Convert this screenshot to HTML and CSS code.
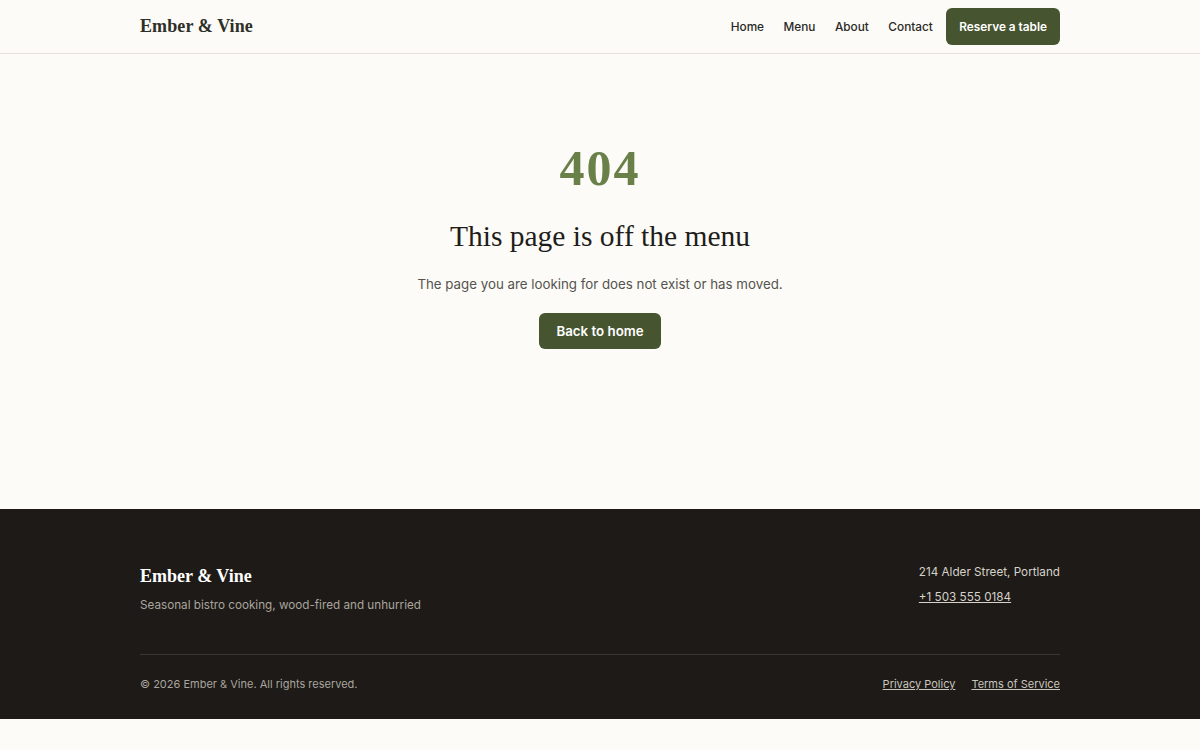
FILE: index.html
```html
<!DOCTYPE html>
<html lang="en">
<head>
    <meta charset="UTF-8">
    <meta name="viewport" content="width=device-width, initial-scale=1.0">
    <title>Page not found | Ember &amp; Vine</title>
    <link rel="stylesheet" href="styles.css">
</head>
<body>
    <header class="site-header">
        <div class="wrap header-row">
            <a class="logo" href="#">Ember &amp; Vine</a>
            <nav class="nav">
                <a href="#">Home</a>
                <a href="#">Menu</a>
                <a href="#">About</a>
                <a href="#">Contact</a>
                <a class="btn btn-nav" href="#">Reserve a table</a>
            </nav>
        </div>
    </header>

    <main class="not-found">
        <div class="code">404</div>
        <h1 class="title">This page is off the menu</h1>
        <p class="lead">The page you are looking for does not exist or has moved.</p>
        <a class="btn btn-home" href="#">Back to home</a>
    </main>

    <footer class="site-footer">
        <div class="wrap">
            <div class="footer-top">
                <div>
                    <div class="footer-logo">Ember &amp; Vine</div>
                    <p class="tagline">Seasonal bistro cooking, wood-fired and unhurried</p>
                </div>
                <div class="contact">
                    <p>214 Alder Street, Portland</p>
                    <a href="#">+1 503 555 0184</a>
                </div>
            </div>
            <div class="footer-bottom">
                <span>&copy; 2026 Ember &amp; Vine. All rights reserved.</span>
                <div class="legal">
                    <a href="#">Privacy Policy</a>
                    <a href="#">Terms of Service</a>
                </div>
            </div>
        </div>
    </footer>
</body>
</html>
```

FILE: styles.css
```css
*{
    padding:0;
    margin:0;
    box-sizing:border-box;
}
body{
    background:#fcfbf7;
    color:#1f1d1a;
    font-family:Inter, "Noto Sans", sans-serif;
}
a{
    color:inherit;
    text-decoration:none;
}
.wrap{
    width:920px;
    margin:0 auto;
}

/* header */
.site-header{
    border-bottom:1px solid #e6e3dc;
}
.header-row{
    height:53px;
    display:flex;
    align-items:center;
    justify-content:space-between;
}
.logo{
    font-family:"Liberation Serif", "DejaVu Serif", serif;
    font-weight:bold;
    font-size:18px;
    letter-spacing:0.1px;
    color:#2e2f27;
}
.nav{
    display:flex;
    align-items:center;
    gap:19.5px;
    font-size:11.8px;
    font-weight:500;
    color:#2a2926;
}
.btn{
    display:inline-flex;
    align-items:center;
    justify-content:center;
    background:#46552f;
    color:#fff;
    font-weight:600;
    border-radius:6px;
}
.btn-nav{
    height:37px;
    padding:0 13px;
    margin-left:-6px;
}

/* 404 block */
.not-found{
    height:455px;
    display:flex;
    flex-direction:column;
    align-items:center;
    padding-top:86px;
    text-align:center;
}
.code{
    font-family:"Liberation Serif", "DejaVu Serif", serif;
    font-weight:bold;
    font-size:50px;
    line-height:56px;
    letter-spacing:2px;
    color:#6a8049;
}
.title{
    font-family:"Liberation Serif", "DejaVu Serif", serif;
    font-weight:normal;
    font-size:29.5px;
    line-height:36px;
    margin-top:22px;
    color:#1f1d1a;
}
.lead{
    font-size:13.3px;
    color:#55534e;
    margin-top:22px;
}
.btn-home{
    width:122px;
    height:36px;
    font-size:13.3px;
    margin-top:21px;
}

/* footer */
.site-footer{
    background:#1d1a17;
    color:#d6d2ca;
    height:210px;
    padding-top:55px;
}
.footer-top{
    display:flex;
    justify-content:space-between;
    padding-bottom:42px;
    border-bottom:1px solid #3a3631;
}
.footer-logo{
    font-family:"Liberation Serif", "DejaVu Serif", serif;
    font-weight:bold;
    font-size:18px;
    color:#fff;
    line-height:24px;
}
.tagline{
    font-size:11.7px;
    color:#a9a59d;
    margin-top:10px;
}
.contact{
    font-size:11.7px;
    line-height:18px;
    margin-top:-1px;
}
.contact a{
    display:block;
    text-decoration:underline;
    margin-top:7px;
}
.footer-bottom{
    display:flex;
    justify-content:space-between;
    align-items:center;
    height:58px;
    font-size:11px;
    color:#a9a59d;
}
.legal{
    display:flex;
    gap:16px;
}
.legal a{
    color:#c9c5bd;
    text-decoration:underline;
}
```
